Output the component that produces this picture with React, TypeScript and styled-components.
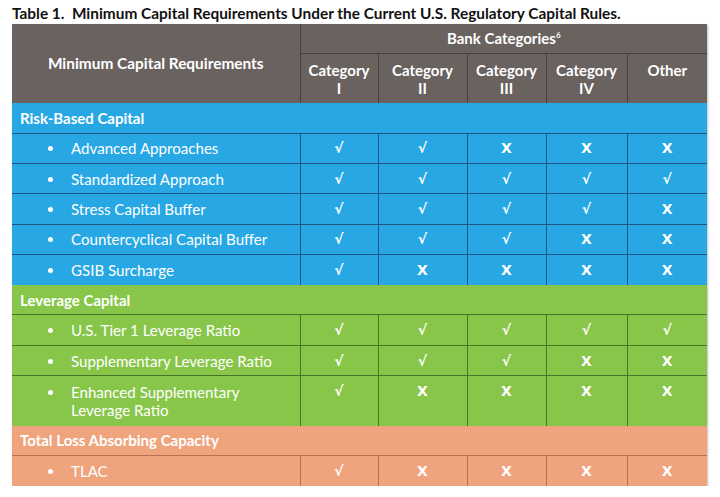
import { FC } from 'react';
import styled, { createGlobalStyle } from 'styled-components';

type Mark = 'yes' | 'no';
type Tone = 'blue' | 'green' | 'orange';

interface Requirement {
  label: string[];
  marks: Mark[];
}
interface Section {
  title: string;
  tone: Tone;
  items: Requirement[];
}

const tones: Record<Tone, { fill: string; line: string }> = {
  blue: { fill: '#27a8e5', line: '#1d5680' },
  green: { fill: '#88c64a', line: '#46752a' },
  orange: { fill: '#efa47d', line: '#b77050' },
};

const sections: Section[] = [
  {
    title: 'Risk-Based Capital',
    tone: 'blue',
    items: [
      { label: ['Advanced Approaches'], marks: ['yes', 'yes', 'no', 'no', 'no'] },
      { label: ['Standardized Approach'], marks: ['yes', 'yes', 'yes', 'yes', 'yes'] },
      { label: ['Stress Capital Buffer'], marks: ['yes', 'yes', 'yes', 'yes', 'no'] },
      { label: ['Countercyclical Capital Buffer'], marks: ['yes', 'yes', 'yes', 'no', 'no'] },
      { label: ['GSIB Surcharge'], marks: ['yes', 'no', 'no', 'no', 'no'] },
    ],
  },
  {
    title: 'Leverage Capital',
    tone: 'green',
    items: [
      { label: ['U.S. Tier 1 Leverage Ratio'], marks: ['yes', 'yes', 'yes', 'yes', 'yes'] },
      { label: ['Supplementary Leverage Ratio'], marks: ['yes', 'yes', 'yes', 'no', 'no'] },
      {
        label: ['Enhanced Supplementary', 'Leverage Ratio'],
        marks: ['yes', 'no', 'no', 'no', 'no'],
      },
    ],
  },
  {
    title: 'Total Loss Absorbing Capacity',
    tone: 'orange',
    items: [{ label: ['TLAC'], marks: ['yes', 'no', 'no', 'no', 'no'] }],
  },
];

const categories = [
  ['Category', 'I'],
  ['Category', 'II'],
  ['Category', 'III'],
  ['Category', 'IV'],
  ['Other'],
];

const columnWidths = [288, 78, 89, 79, 81, 80];

const GlobalStyle = createGlobalStyle`
  body {
    margin: 0;
    background: #ffffff;
    font-family: Lato, 'Open Sans', sans-serif;
  }
`;

const App: FC = () => {
  return (
    <Page>
      <GlobalStyle />
      <Title>Table 1.&nbsp; Minimum Capital Requirements Under the Current U.S. Regulatory Capital Rules.</Title>
      <Table>
        <colgroup>
          {columnWidths.map((w, i) => (
            <Col key={i} $width={w} />
          ))}
        </colgroup>
        <thead>
          <tr>
            <MainHeadCell rowSpan={2}>Minimum Capital Requirements</MainHeadCell>
            <GroupCell colSpan={5}>
              Bank Categories<sup>6</sup>
            </GroupCell>
          </tr>
          <tr>
            {categories.map((lines, i) => (
              <HeadCell key={i}>
                {lines.map((l) => (
                  <div key={l}>{l}</div>
                ))}
              </HeadCell>
            ))}
          </tr>
        </thead>
        <tbody>
          {sections.map((section) => (
            <SectionRows key={section.title} section={section} />
          ))}
        </tbody>
      </Table>
    </Page>
  );
};

const SectionRows: FC<{ section: Section }> = ({ section }) => {
  const { fill, line } = tones[section.tone];
  return (
    <>
      <tr>
        <SectionCell colSpan={6} $fill={fill} $line={line}>
          {section.title}
        </SectionCell>
      </tr>
      {section.items.map((item) => {
        const tall = item.label.length > 1;
        return (
          <tr key={item.label.join(' ')}>
            <LabelCell $fill={fill} $line={line} $tall={tall}>
              <LabelWrap>
                <Bullet />
                <LabelText>
                  {item.label.map((l) => (
                    <div key={l}>{l}</div>
                  ))}
                </LabelText>
              </LabelWrap>
            </LabelCell>
            {item.marks.map((m, i) => (
              <MarkCell key={i} $fill={fill} $line={line} $tall={tall}>
                {m === 'yes' ? '√' : 'X'}
              </MarkCell>
            ))}
          </tr>
        );
      })}
    </>
  );
};

const Page = styled.div`
  padding: 4px 0 0 12px;
  width: 720px;
  box-sizing: border-box;
`;

const Title = styled.div`
  font-family: Lato, 'Open Sans', sans-serif;
  font-weight: 700;
  font-size: 15.4px;
  color: #111;
  line-height: 18px;
  height: 20px;
  white-space: nowrap;
`;

const Table = styled.table`
  border-collapse: collapse;
  table-layout: fixed;
  width: 695px;
  color: #fff;
  box-shadow: 1px 1px 2px rgba(0, 0, 0, 0.25);
  th,
  td {
    box-sizing: border-box;
  }
`;

const Col = styled.col<{ $width: number }>`
  width: ${({ $width }) => $width}px;
`;

const HeadCell = styled.th`
  background: #6a625f;
  border-left: 1px solid #48423f;
  border-top: 1px solid #48423f;
  font-weight: 700;
  font-size: 15px;
  line-height: 18px;
  text-align: center;
  vertical-align: top;
  padding: 7px 0 0 0;
  height: 50px;
`;

const MainHeadCell = styled(HeadCell)`
  border-left: none;
  border-top: none;
  font-size: 15.4px;
  vertical-align: middle;
  padding: 0 0 2px 0;
`;

const GroupCell = styled.th`
  background: #6a625f;
  border-left: 1px solid #48423f;
  font-weight: 700;
  font-size: 15px;
  height: 29px;
  padding: 0;
  text-align: center;
  sup {
    font-size: 8px;
    vertical-align: 6px;
    line-height: 0;
  }
`;

interface ToneProps {
  $fill: string;
  $line: string;
  $tall?: boolean;
}

const SectionCell = styled.td<ToneProps>`
  background: ${({ $fill }) => $fill};
  font-weight: 700;
  font-size: 15px;
  height: 30px;
  padding: 0 0 0 8px;
`;

const LabelCell = styled.td<ToneProps>`
  background: ${({ $fill }) => $fill};
  border-top: 1px solid ${({ $line }) => $line};
  font-size: 15.1px;
  line-height: 18px;
  height: ${({ $tall }) => ($tall ? '50px' : '30.4px')};
  padding: 0;
  vertical-align: middle;
`;

const LabelWrap = styled.div`
  display: flex;
  align-items: flex-start;
  gap: 18px;
  padding-left: 36px;
`;

const Bullet = styled.i`
  flex: none;
  width: 5px;
  height: 5px;
  border-radius: 50%;
  background: #fff;
  margin-top: 7px;
`;

const LabelText = styled.div`
  white-space: nowrap;
`;

const MarkCell = styled.td<ToneProps>`
  background: ${({ $fill }) => $fill};
  border-top: 1px solid ${({ $line }) => $line};
  border-left: 1px solid ${({ $line }) => $line};
  font-family: 'DejaVu Sans', sans-serif;
  font-weight: 700;
  font-size: 14px;
  line-height: 18px;
  text-align: center;
  vertical-align: ${({ $tall }) => ($tall ? 'top' : 'middle')};
  padding: ${({ $tall }) => ($tall ? '6px 0 0 0' : '0')};
`;

export default App;
